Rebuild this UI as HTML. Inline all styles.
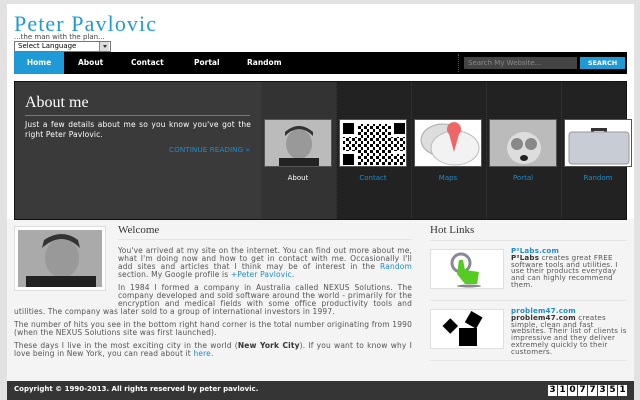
<!DOCTYPE html>
<html><head><meta charset="utf-8">
<style>
*{margin:0;padding:0;box-sizing:border-box}
body{width:640px;height:400px;overflow:hidden;background:#e2e2e2;font-family:"DejaVu Sans","Liberation Sans",sans-serif;position:relative}
#page{position:absolute;left:7px;top:4px;width:627px;height:396px;background:#f4f4f4}
#head{position:absolute;left:0;top:0;width:627px;height:215px;background:#fff}
.title{position:absolute;left:7px;top:7px;font:22px "Liberation Serif",serif;color:#1e9bd7;letter-spacing:1.1px}
.tag{position:absolute;left:7px;top:29px;font-size:7px;color:#444}
.sel{position:absolute;left:7px;top:37px;width:97px;height:11px;border:1px solid #777;background:#fff;font-size:7px;line-height:9px;padding-left:3px;color:#000}
.sel i{position:absolute;right:1px;top:0;width:10px;height:9px;background:#ddd;border-left:1px solid #888}
.sel i:after{content:"";position:absolute;left:3px;top:3px;border:2px solid transparent;border-top:3px solid #333}
#nav{position:absolute;left:7px;top:48px;width:613px;height:22px;background:#000}
#nav a{position:absolute;top:0;height:22px;line-height:22px;color:#fff;font-size:7.5px;font-weight:bold;text-decoration:none}
.srch{position:absolute;left:450px;top:5px;width:113px;height:12px;background:#444;color:#888;font-size:7px;line-height:12px;padding-left:4px}
.btn{position:absolute;left:566px;top:5px;width:45px;height:12px;background:#1e9bd7;color:#fff;font-size:6.5px;font-weight:bold;line-height:12px;text-align:center}
.dots{position:absolute;left:444px;top:2px;height:18px;border-left:1px dotted #555}
#feat{position:absolute;left:7px;top:77px;width:613px;height:139px;background:#222;border:1px solid #111}
.left{position:absolute;left:0;top:0;width:246px;height:137px;background:#3a3a3a}
.left h2{position:absolute;left:10px;top:12px;font:normal 16px "Liberation Serif",serif;color:#fff}
.left .hr{position:absolute;left:10px;top:33px;width:225px;border-top:1px solid #777}
.left p{position:absolute;left:10px;top:38px;width:226px;font-size:7.5px;letter-spacing:0.15px;color:#fff;line-height:9.5px;text-align:justify}
.left .more{position:absolute;right:11px;top:63px;font-size:7.3px;color:#1e8ccc}
.cell{position:absolute;top:0;width:75px;height:137px;border-left:1px dotted #3a3a3a}
.cell .im{position:absolute;left:2px;top:37px;width:68px;height:48px;background:#fff;border:1px solid #555;overflow:hidden}
.cell span{position:absolute;left:0;width:72px;top:92px;text-align:center;font-size:7px;color:#1e8ccc}
.pic{position:absolute;left:7px;top:222px;width:92px;height:65px;background:#fff;border:1px solid #ddd;padding:3px}
.txt{position:absolute;left:7px;top:220px;width:398px;font-size:7.5px;letter-spacing:0.15px;color:#555;line-height:8px;text-align:justify}
.txt h3{font:normal 11px "Liberation Serif",serif;letter-spacing:0;color:#333;margin-left:104px;padding-bottom:3px;border-bottom:1px solid #e4e4e4;margin-bottom:7px}
.txt p{margin-bottom:5px}
.txt a{color:#1e8ccc}
.float{float:left;width:104px;height:56px}
.hot{position:absolute;left:423px;top:220px;width:197px}
.hot h3{font:normal 11px "Liberation Serif",serif;color:#333;padding-bottom:4px;border-bottom:1px solid #e4e4e4}
.item{position:relative;height:58px;border-bottom:1px solid #e6e6e6;margin-top:2px}
.item .ib{position:absolute;left:0;top:6px;width:74px;height:40px;background:#fff;border:1px solid #e0e0e0}
.item .it{position:absolute;left:81px;top:5px;width:118px;font-size:7.1px;letter-spacing:0.2px;line-height:6.8px;color:#555}
.item .it b.l{color:#1e8ccc;display:block}
.item .it b{color:#333}
#foot{position:absolute;left:0;top:377px;width:627px;height:19px;background:#353535;color:#fff;font-size:7px;font-weight:bold;line-height:16px;padding-left:7px}
.ctr{position:absolute;right:7px;top:4px;display:flex;gap:1px}
.ctr i{font-style:normal;width:9px;height:11px;background:#fff;color:#000;font-size:9px;font-weight:bold;line-height:11px;text-align:center}
</style></head><body>
<div id="page">
<div id="head">
<div class="title">Peter Pavlovic</div>
<div class="tag">...the man with the plan...</div>
<div class="sel">Select Language<i></i></div>
</div>
<div id="nav">
<a style="left:0;width:50px;background:#1e9bd7;text-align:center">Home</a>
<a style="left:64px">About</a>
<a style="left:117px">Contact</a>
<a style="left:180px">Portal</a>
<a style="left:233px">Random</a>
<div class="dots"></div>
<div class="srch">Search My Website...</div>
<div class="btn">SEARCH</div>
</div>
<div id="feat">
<div class="left">
<h2>About me</h2><div class="hr"></div>
<p>Just a few details about me so you know you've got the right Peter Pavlovic.</p>
<div class="more">CONTINUE READING »</div>
</div>
<div class="cell" style="left:246px;background:#333"><div class="im"><svg width="68" height="48"><rect width="68" height="48" fill="#bbb"/><ellipse cx="34" cy="24" rx="13" ry="15" fill="#999"/><path d="M20 16 Q34 2 48 16 L48 12 Q34 0 20 12Z" fill="#333"/><rect x="14" y="38" width="40" height="10" fill="#222"/></svg></div><span style="color:#fff">About</span></div>
<div class="cell" style="left:321px"><div class="im"><svg width="68" height="48" viewBox="0 0 68 48"><defs><pattern id="q" width="6" height="6" patternUnits="userSpaceOnUse"><rect width="3" height="3"/><rect x="3" y="3" width="2" height="3"/></pattern></defs><rect width="68" height="48" fill="#fff"/><g fill="#000"><rect x="3" y="3" width="11" height="11"/><rect x="54" y="3" width="11" height="11"/><rect x="3" y="34" width="11" height="11"/></g><rect x="17" y="4" width="34" height="40" fill="url(#q)"/><rect x="3" y="17" width="62" height="14" fill="url(#q)"/><rect x="17" y="34" width="48" height="11" fill="url(#q)"/></svg></div><span>Contact</span></div>
<div class="cell" style="left:396px"><div class="im"><svg width="68" height="48"><ellipse cx="28" cy="20" rx="22" ry="16" fill="#ddd" stroke="#aaa"/><ellipse cx="40" cy="28" rx="24" ry="17" fill="#f2f2f2" stroke="#bbb"/><path d="M34 14 a7 7 0 1 1 10 0 L39 32Z" fill="#e66"/></svg></div><span>Maps</span></div>
<div class="cell" style="left:471px"><div class="im"><svg width="68" height="48"><rect width="68" height="48" fill="#bbb"/><ellipse cx="34" cy="28" rx="17" ry="16" fill="#ddd"/><circle cx="27" cy="24" r="6" fill="#888"/><circle cx="41" cy="24" r="6" fill="#888"/><ellipse cx="34" cy="38" rx="4" ry="3" fill="#222"/></svg></div><span>Portal</span></div>
<div class="cell" style="left:546px"><div class="im"><svg width="68" height="48"><path d="M26 8 h16 v5 h-3 v-2 h-10 v2 h-3Z" fill="#333"/><rect x="4" y="12" width="60" height="32" rx="3" fill="#c8ccd4" stroke="#999"/></svg></div><span>Random</span></div>
</div>
<div class="pic"><svg width="84" height="57"><rect width="84" height="57" fill="#aaa"/><ellipse cx="44" cy="28" rx="17" ry="20" fill="#999"/><path d="M24 18 Q44 0 62 18 L60 10 Q44 -2 26 10Z" fill="#333"/><rect x="8" y="46" width="70" height="11" fill="#222"/></svg></div>
<div class="txt">
<h3>Welcome</h3>
<div class="float"></div>
<p>You've arrived at my site on the internet. You can find out more about me, what I'm doing now and how to get in contact with me. Occasionally I'll add sites and articles that I think may be of interest in the <a>Random</a> section. My Google profile is <a>+Peter Pavlovic</a>.</p>
<p>In 1984 I formed a company in Australia called NEXUS Solutions. The company developed and sold software around the world - primarily for the encryption and medical fields with some office productivity tools and utilities. The company was later sold to a group of international investors in 1997.</p>
<p>The number of hits you see in the bottom right hand corner is the total number originating from 1990 (when the NEXUS Solutions site was first launched).</p>
<p>These days I live in the most exciting city in the world (<b style="color:#333">New York City</b>). If you want to know why I love being in New York, you can read about it <a>here</a>.</p>
</div>
<div class="hot">
<h3>Hot Links</h3>
<div class="item"><div class="ib"><svg width="72" height="38"><circle cx="30" cy="13" r="9" fill="none" stroke="#889" stroke-width="3"/><path d="M28 10 L32 10 L34 20 L48 22 L46 34 L34 34 L26 24Z" fill="#5c2"/><ellipse cx="38" cy="36" rx="12" ry="1.5" fill="#888"/></svg></div><div class="it"><b class="l">P²Labs.com</b><b>P²Labs</b> creates great FREE software tools and utilities. I use their products everyday and can highly recommend them.</div></div>
<div class="item"><div class="ib"><svg width="72" height="38"><rect x="28" y="18" width="18" height="18" fill="#000"/><rect x="14" y="10" width="11" height="11" fill="#000" transform="rotate(-45 20 16)"/><rect x="36" y="3" width="13" height="13" fill="#000" transform="rotate(30 42 10)"/></svg></div><div class="it"><b class="l">problem47.com</b><b>problem47.com</b> creates simple, clean and fast websites. Their list of clients is impressive and they deliver extremely quickly to their customers.</div></div>
</div>
<div id="foot">Copyright © 1990-2013. All rights reserved by peter pavlovic.
<div class="ctr"><i>3</i><i>1</i><i>0</i><i>7</i><i>7</i><i>3</i><i>5</i><i>1</i></div></div>
</div>
</body></html>
